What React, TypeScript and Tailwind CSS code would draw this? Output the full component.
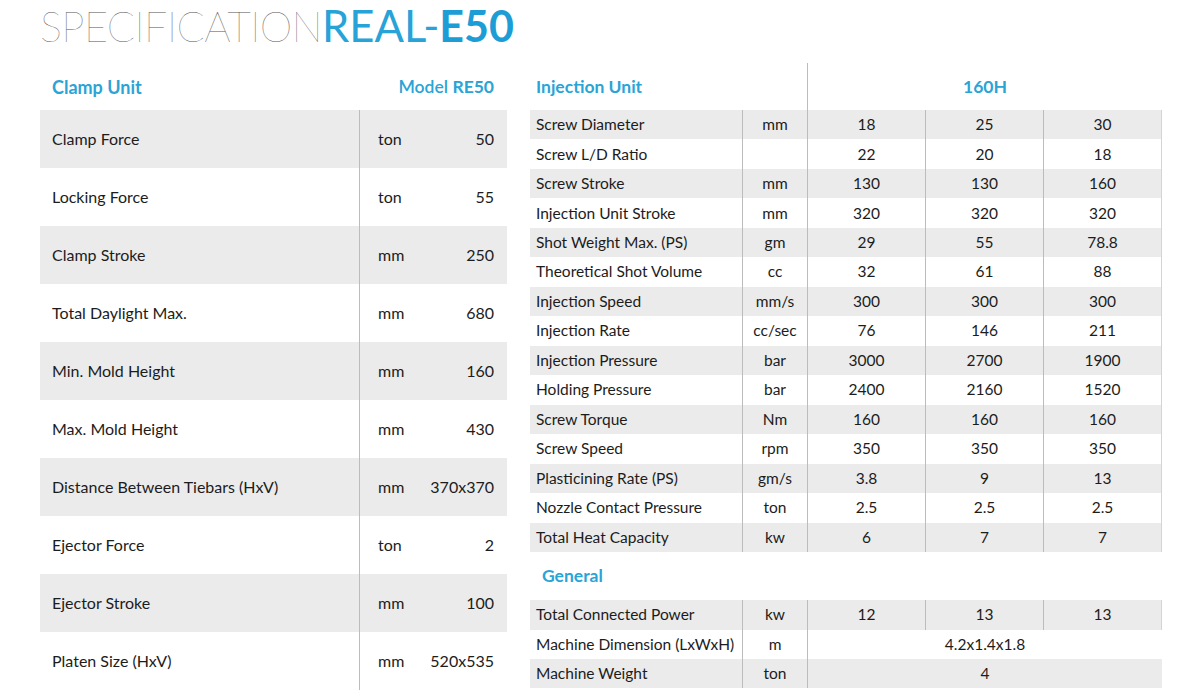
import React from "react";

const leftRows: [string, string, string][] = [
  ["Clamp Force", "ton", "50"],
  ["Locking Force", "ton", "55"],
  ["Clamp Stroke", "mm", "250"],
  ["Total Daylight Max.", "mm", "680"],
  ["Min. Mold Height", "mm", "160"],
  ["Max. Mold Height", "mm", "430"],
  ["Distance Between Tiebars (HxV)", "mm", "370x370"],
  ["Ejector Force", "ton", "2"],
  ["Ejector Stroke", "mm", "100"],
  ["Platen Size (HxV)", "mm", "520x535"],
];

const injRows: [string, string, string, string, string][] = [
  ["Screw Diameter", "mm", "18", "25", "30"],
  ["Screw L/D Ratio", "", "22", "20", "18"],
  ["Screw Stroke", "mm", "130", "130", "160"],
  ["Injection Unit Stroke", "mm", "320", "320", "320"],
  ["Shot Weight Max. (PS)", "gm", "29", "55", "78.8"],
  ["Theoretical Shot Volume", "cc", "32", "61", "88"],
  ["Injection Speed", "mm/s", "300", "300", "300"],
  ["Injection Rate", "cc/sec", "76", "146", "211"],
  ["Injection Pressure", "bar", "3000", "2700", "1900"],
  ["Holding Pressure", "bar", "2400", "2160", "1520"],
  ["Screw Torque", "Nm", "160", "160", "160"],
  ["Screw Speed", "rpm", "350", "350", "350"],
  ["Plasticining Rate (PS)", "gm/s", "3.8", "9", "13"],
  ["Nozzle Contact Pressure", "ton", "2.5", "2.5", "2.5"],
  ["Total Heat Capacity", "kw", "6", "7", "7"],
];

function RightRow({
  label,
  unit,
  vals,
  gray,
}: {
  label: string;
  unit: string;
  vals: string[];
  gray: boolean;
}) {
  return (
    <div className={`flex h-[29.47px] items-center text-[15.5px] text-[#1c1c1c] ${gray ? "bg-[#ebebeb]" : "bg-white"}`}>
      <div className="w-[213px] h-full flex items-center pl-[6px] border-r border-[#bcbcbc] whitespace-nowrap">{label}</div>
      <div className="w-[65px] h-full flex items-center justify-center border-r border-[#bcbcbc]">{unit}</div>
      {vals.length === 1 ? (
        <div className="w-[354px] h-full flex items-center justify-center">{vals[0]}</div>
      ) : (
        <>
          <div className="w-[118px] h-full flex items-center justify-center border-r border-[#bcbcbc]">{vals[0]}</div>
          <div className="w-[118px] h-full flex items-center justify-center border-r border-[#bcbcbc]">{vals[1]}</div>
          <div className="w-[118px] h-full flex items-center justify-center border-r border-[#d4d4d4]">{vals[2]}</div>
        </>
      )}
    </div>
  );
}

export default function App() {
  return (
    <div className="w-[1200px] h-[700px] bg-white pl-[40px] overflow-hidden font-['Lato',sans-serif]">
      <h1 className="h-[63px] pt-[1px] leading-[48px] whitespace-nowrap">
        <span className="font-extralight text-[41.5px] tracking-[-0.6px] text-[#555555]">SPECIFICATION</span>
        <span className="font-normal text-[43.5px] text-[#27a3d8]">REAL-</span>
        <span className="font-bold text-[43px] text-[#1d9dd6]">E50</span>
      </h1>
      <div className="flex gap-[23px]">
        {/* Left table */}
        <div className="w-[467px]">
          <div className="h-[47px] pt-[2px] flex items-center justify-between pl-[12px] pr-[13px] text-[17.5px] text-[#2aa4d6]">
            <span className="font-bold text-[18px]">Clamp Unit</span>
            <span className="font-semibold">
              Model <span className="font-bold">RE50</span>
            </span>
          </div>
          {leftRows.map(([label, unit, val], i) => (
            <div
              key={label}
              className={`flex h-[58px] text-[16px] text-[#1c1c1c] ${i % 2 === 0 ? "bg-[#ebebeb]" : "bg-white"}`}
            >
              <div className="w-[319px] flex items-center pl-[12px]">{label}</div>
              <div className="flex-1 flex items-center justify-between border-l border-[#bcbcbc] pl-[18px] pr-[13px]">
                <span>{unit}</span>
                <span>{val}</span>
              </div>
            </div>
          ))}
        </div>
        {/* Right table */}
        <div className="w-[632px]">
          <div className="h-[47px] flex items-center text-[17.5px] font-bold text-[#2aa4d6]">
            <div className="w-[277px] pl-[6px] pt-[2px]">Injection Unit</div>
            <div className="flex-1 h-full pt-[2px] flex items-center justify-center border-l border-[#bcbcbc]">160H</div>
          </div>
          {injRows.map(([label, unit, a, b, c], i) => (
            <RightRow key={label} label={label} unit={unit} vals={[a, b, c]} gray={i % 2 === 0} />
          ))}
          <div className="h-[48px] flex items-center pl-[12px] text-[17.5px] font-bold text-[#2aa4d6]">General</div>
          <RightRow label="Total Connected Power" unit="kw" vals={["12", "13", "13"]} gray />
          <RightRow label="Machine Dimension (LxWxH)" unit="m" vals={["4.2x1.4x1.8"]} gray={false} />
          <RightRow label="Machine Weight" unit="ton" vals={["4"]} gray />
        </div>
      </div>
    </div>
  );
}
